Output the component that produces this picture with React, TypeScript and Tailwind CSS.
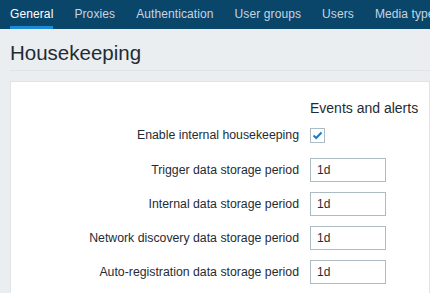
import React from "react";

const tabs = ["General", "Proxies", "Authentication", "User groups", "Users", "Media types"];

const rows = [
  "Trigger data storage period",
  "Internal data storage period",
  "Network discovery data storage period",
  "Auto-registration data storage period",
];

export default function App() {
  return (
    <div
      className="w-[430px] h-[293px] overflow-hidden bg-[#ebeef0] text-[#1f2c33]"
      style={{ fontFamily: '"Liberation Sans", Arial, sans-serif' }}
    >
      <nav className="h-[29px] bg-[#0a466a] flex gap-[21px] px-[10px] whitespace-nowrap">
        {tabs.map((t, i) => (
          <div
            key={t}
            className={
              i === 0
                ? "h-[29px] text-[12px] tracking-[0.1px] text-white border-b-[3px] border-[#1d8ad6]"
                : "h-[29px] text-[12px] tracking-[0.1px] text-[#c6d5e1]"
            }
          >
            <span className="block leading-[27px] pt-[1px]">{t}</span>
          </div>
        ))}
      </nav>

      <div className="ml-[10px] pt-[12px] pb-[5px] border-b border-[#dfe4e7]">
        <h1 className="text-[20.5px] leading-[24px] font-normal">Housekeeping</h1>
      </div>

      <div className="ml-[10px] mt-[10px] bg-white border border-[#dfe4e7] h-[300px] pt-[14px]">
        <div className="grid grid-cols-[288px_1fr] gap-x-[11px]">
          <div />
          <div className="h-[24px] text-[14px] leading-[24px] whitespace-nowrap">Events and alerts</div>

          <div className="mt-[3px] h-[24px] flex items-center justify-end text-[12.3px] whitespace-nowrap">
            Enable internal housekeeping
          </div>
          <div className="mt-[3px] h-[24px] flex items-center">
            <div className="w-[15px] h-[15px] border border-[#acbbc4] bg-white flex items-center justify-center">
              <svg width="11" height="9" viewBox="0 0 11 9">
                <path d="M1.5 4.5 L4.2 7 L9.5 1.5" fill="none" stroke="#1f7ac4" strokeWidth="2" />
              </svg>
            </div>
          </div>

          {rows.map((r, i) => (
            <React.Fragment key={r}>
              <div
                className={
                  (i === 0 ? "mt-[11px] " : "mt-[10px] ") +
                  "h-[24px] flex items-center justify-end text-[12.3px] whitespace-nowrap"
                }
              >
                {r}
              </div>
              <div className={(i === 0 ? "mt-[11px] " : "mt-[10px] ") + "h-[24px]"}>
                <div className="w-[76px] h-[24px] border border-[#acbbc4] bg-white px-[6px] text-[12px] leading-[22px]">
                  1d
                </div>
              </div>
            </React.Fragment>
          ))}
        </div>
      </div>
    </div>
  );
}
